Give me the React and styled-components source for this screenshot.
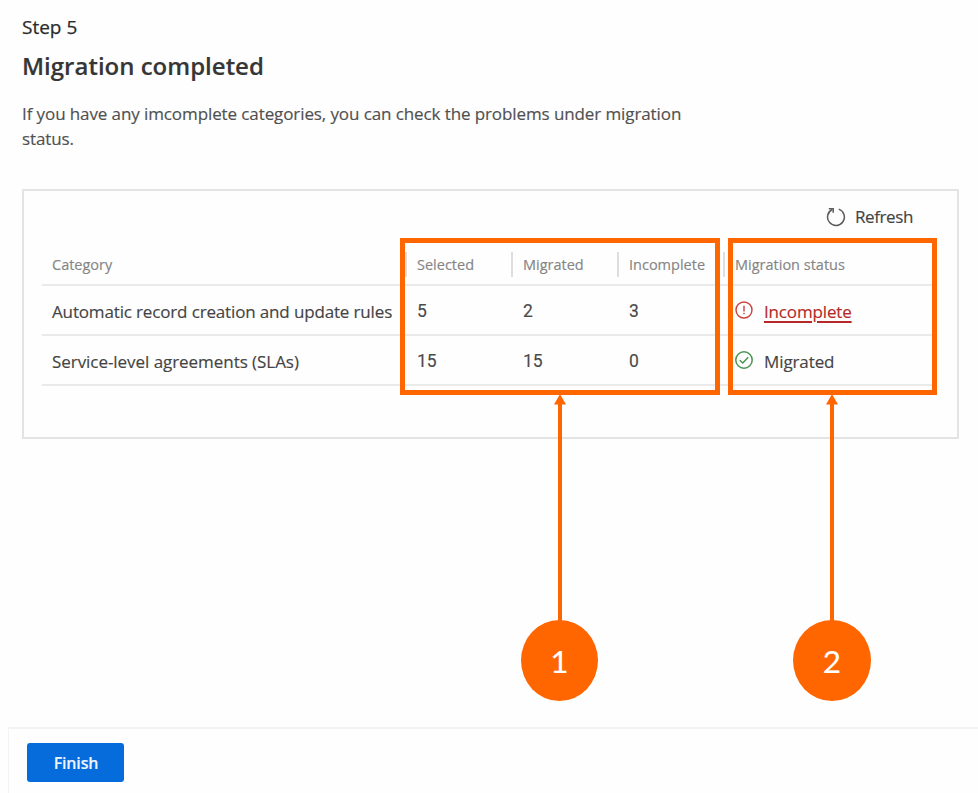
import React from "react";
import styled, { createGlobalStyle } from "styled-components";

const Global = createGlobalStyle`
  * { box-sizing: border-box; }
  body { margin: 0; background: #fefefe; }
`;

const Page = styled.div`
  position: relative;
  display: flex;
  flex-direction: column;
  width: 978px;
  height: 793px;
  overflow: hidden;
  background: #fefefe;
  color: #444;
  font-family: "Open Sans", "Noto Sans", sans-serif;
  -webkit-text-stroke: 0.15px currentColor;
`;

const Main = styled.main`
  flex: 1;
  padding: 14px 19px 0 22px;
`;

const Step = styled.div`
  font-size: 19px;
  line-height: 26px;
  color: #2b2b2b;
  -webkit-text-stroke: 0.25px #2b2b2b;
`;

const Title = styled.h1`
  margin: 9px 0 0;
  font-size: 24px;
  font-weight: 600;
  line-height: 34px;
  color: #363636;
`;

const Intro = styled.p`
  margin: 18px 0 0;
  width: 700px;
  font-size: 17px;
  line-height: 25px;
  color: #505050;
  letter-spacing: -0.1px;
`;

const Panel = styled.section`
  margin-top: 38px;
  height: 250px;
  padding: 13px 20px 0 18px;
  border: 2px solid #e4e4e4;
`;

const Toolbar = styled.div`
  display: flex;
  justify-content: flex-end;
  padding-right: 24px;
`;

const RefreshButton = styled.button`
  display: flex;
  align-items: center;
  gap: 9px;
  height: 26px;
  padding: 0;
  border: 0;
  background: none;
  color: #444;
  font: 400 17px/26px "Open Sans", sans-serif;
  letter-spacing: -0.4px;
`;

const Row = styled.div`
  display: grid;
  grid-template-columns: 363px 106px 106px 106px 1fr;
  width: 895px;
  height: 50px;
  border-bottom: 2px solid #eaeaea;
`;

const HeadRow = styled(Row)`
  height: 56px;
  padding-top: 22px;
`;

const HeadCell = styled.div`
  display: flex;
  align-items: center;
  height: 25px;
  padding-left: 10px;
  border-left: ${(p) => (p.$first ? "0" : "2px solid #dedede")};
  font-size: 14.5px;
  color: #858585;
`;

const Cell = styled.div`
  display: flex;
  align-items: center;
  padding: 3px 0 0 10px;
  font-size: 17px;
  white-space: nowrap;
  letter-spacing: ${(p) => p.$track}px;
`;

const NumberCell = styled(Cell)`
  padding: 1px 0 0 12px;
  font-family: Roboto, sans-serif;
  font-size: 17.5px;
  color: #4a4a4a;
`;

const StatusCell = styled(Cell)`
  gap: 11px;
  padding-left: 12px;
`;

const StatusLink = styled.a`
  color: #b52a26;
  text-decoration: underline;
  text-decoration-thickness: 1.5px;
  text-underline-offset: 3px;
`;

const StatusIcon = styled.svg`
  flex: none;
  margin-top: -3px;
`;

const Footer = styled.footer`
  height: 66px;
  margin-left: 8px;
  padding: 14px 0 0 18px;
  border-top: 2px solid #f3f3f3;
  border-left: 1px solid #f3f3f3;
`;

const FinishButton = styled.button`
  width: 97px;
  height: 39px;
  padding: 2px 0 0 1px;
  border: 0;
  border-radius: 3px;
  background: #066cdc;
  color: #eaf4ff;
  font: 600 16px/37px "Open Sans", sans-serif;
  letter-spacing: -0.15px;
`;

const Highlight = styled.div`
  position: absolute;
  top: 238px;
  left: ${(p) => p.$left}px;
  width: ${(p) => p.$width}px;
  height: 157px;
  border: 5px solid #ff6600;
`;

const Callout = styled.div`
  position: absolute;
  top: 394px;
  left: ${(p) => p.$left}px;
  width: ${(p) => p.$width}px;
  display: flex;
  flex-direction: column;
  align-items: center;
`;

const Arrow = styled.svg`
  display: block;
  margin-left: ${(p) => p.$shift}px;
`;

const Bubble = styled.div`
  width: 100%;
  height: 81px;
  margin-top: -2px;
  border-radius: 50%;
  background: #ff6600;
  color: #fff;
  text-align: center;
  font: 400 31.5px/83px Lato, sans-serif;
`;

const RefreshIcon = () => (
  <svg width="20" height="20" viewBox="0 0 20 20" fill="none" stroke="#5c5c5c" strokeWidth="1.5">
    <path d="M12.8 2.1 A8.4 8.4 0 1 1 6.2 2.5" />
    <path d="M2.8 1.8 H7.2 V5.8" />
  </svg>
);

const AlertIcon = () => (
  <StatusIcon width="18" height="18" viewBox="0 0 18 18" fill="none" stroke="#c9403c" strokeWidth="1.4">
    <circle cx="9" cy="9" r="8" />
    <path d="M9 4.8 V10.4 M9 11.8 V13.2" />
  </StatusIcon>
);

const CheckIcon = () => (
  <StatusIcon width="18" height="18" viewBox="0 0 18 18" fill="none" stroke="#4a9452" strokeWidth="1.5">
    <circle cx="9" cy="9" r="8.2" />
    <path d="M4.8 9.2 L7.8 12 L13.2 6.2" />
  </StatusIcon>
);

const Marker = ({ left, width, shift, children }) => (
  <Callout $left={left} $width={width}>
    <Arrow $shift={shift} width="12" height="228" viewBox="0 0 12 228" fill="#ff6600">
      <path d="M6 0 L12 10.5 H8 V228 H4 V10.5 H0 Z" />
    </Arrow>
    <Bubble>{children}</Bubble>
  </Callout>
);

export default function App() {
  return (
    <>
      <Global />
      <Page>
        <Main>
          <Step>Step 5</Step>
          <Title>Migration completed</Title>
          <Intro>
            If you have any imcomplete categories, you can check the problems under migration
            <br />
            status.
          </Intro>
          <Panel>
            <Toolbar>
              <RefreshButton>
                <RefreshIcon />
                Refresh
              </RefreshButton>
            </Toolbar>
            <HeadRow>
              <HeadCell $first>Category</HeadCell>
              <HeadCell>Selected</HeadCell>
              <HeadCell>Migrated</HeadCell>
              <HeadCell>Incomplete</HeadCell>
              <HeadCell>Migration status</HeadCell>
            </HeadRow>
            <Row>
              <Cell $track={-0.15}>Automatic record creation and update rules</Cell>
              <NumberCell $track={0}>5</NumberCell>
              <NumberCell $track={0}>2</NumberCell>
              <NumberCell $track={0}>3</NumberCell>
              <StatusCell $track={-0.15}>
                <AlertIcon />
                <StatusLink>Incomplete</StatusLink>
              </StatusCell>
            </Row>
            <Row>
              <Cell $track={-0.05}>Service-level agreements (SLAs)</Cell>
              <NumberCell $track={0}>15</NumberCell>
              <NumberCell $track={0}>15</NumberCell>
              <NumberCell $track={0}>0</NumberCell>
              <StatusCell $track={-0.1}>
                <CheckIcon />
                Migrated
              </StatusCell>
            </Row>
          </Panel>
        </Main>
        <Footer>
          <FinishButton>Finish</FinishButton>
        </Footer>
        <Highlight $left={400} $width={320} />
        <Highlight $left={728} $width={209} />
        <Marker left={521} width={77} shift={1}>1</Marker>
        <Marker left={793} width={78} shift={0}>2</Marker>
      </Page>
    </>
  );
}
